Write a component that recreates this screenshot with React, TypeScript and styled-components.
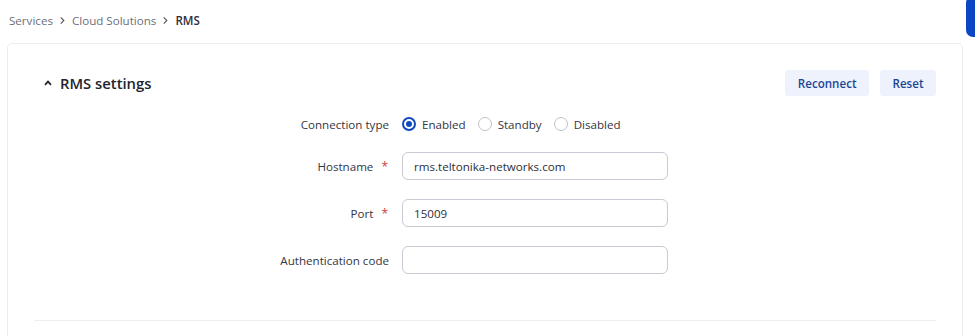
import styled, { createGlobalStyle } from "styled-components";

const GlobalStyle = createGlobalStyle`
  html, body {
    margin: 0;
    padding: 0;
    background: #ffffff;
    font-family: "Open Sans", "Noto Sans", sans-serif;
    color: #2b2b36;
  }
  * { box-sizing: border-box; }
`;

const Page = styled.div`
  position: relative;
  width: 975px;
  height: 336px;
  overflow: hidden;
  padding: 0 12px 0 7px;
`;

const SideTab = styled.div`
  position: absolute;
  top: -4px;
  right: -10px;
  width: 19px;
  height: 41px;
  background: #0b47c4;
  border-radius: 7px;
`;

const Breadcrumb = styled.nav`
  display: flex;
  align-items: center;
  gap: 5px;
  height: 43px;
  padding: 0 0 3px 2px;
  font-size: 11.6px;
`;

const Crumb = styled.span<{ $current?: boolean }>`
  color: ${(p) => (p.$current ? "#2f2f3a" : "#6c6f7a")};
  font-weight: ${(p) => (p.$current ? 600 : 400)};
`;

const Sep = styled.svg`
  width: 9px;
  height: 9px;
  margin-top: 1px;
`;

const Card = styled.section`
  border: 1px solid #ebedf3;
  border-radius: 5px;
  padding: 25px 26px 0 26px;
  height: 320px;
`;

const CardHeader = styled.div`
  display: flex;
  align-items: center;
  justify-content: space-between;
  height: 28px;
`;

const Title = styled.h2`
  display: flex;
  align-items: center;
  gap: 8px;
  margin: 0 0 0 10px;
  font-size: 14.8px;
  font-weight: 600;
  color: #23232d;
`;

const Actions = styled.div`
  display: flex;
  gap: 11px;
`;

const SoftButton = styled.button`
  height: 26px;
  padding: 0 12.5px;
  border: none;
  border-radius: 3px;
  background: #edf2fd;
  color: #1d4592;
  font-family: inherit;
  font-size: 11.6px;
  font-weight: 600;
`;

const Form = styled.div`
  display: grid;
  grid-template-columns: 355px 266px;
  grid-template-rows: 18px repeat(3, 28px);
  column-gap: 13px;
  row-gap: 19px;
  margin-top: 18px;
`;

const Label = styled.label`
  display: flex;
  align-items: center;
  justify-content: flex-end;
  gap: 8px;
  font-size: 11.6px;
  color: #35353f;
  white-space: nowrap;
`;

const Req = styled.span`
  color: #d23c3c;
  font-size: 12px;
  margin-right: 1px;
`;

const Radios = styled.div`
  display: flex;
  align-items: center;
  gap: 12px;
  white-space: nowrap;
`;

const RadioOpt = styled.span`
  display: flex;
  align-items: center;
  gap: 6px;
  font-size: 11.6px;
  color: #35353f;
`;

const Dot = styled.span<{ $on?: boolean }>`
  width: 14px;
  height: 14px;
  border-radius: 50%;
  border: ${(p) => (p.$on ? "2px solid #0e49c2" : "1px solid #bfc2cc")};
  display: flex;
  align-items: center;
  justify-content: center;
  &::after {
    content: "";
    display: ${(p) => (p.$on ? "block" : "none")};
    width: 6px;
    height: 6px;
    border-radius: 50%;
    background: #0e49c2;
  }
`;

const Input = styled.input`
  width: 266px;
  height: 28px;
  border: 1px solid #c9cad4;
  border-radius: 6px;
  padding: 0 11px;
  font-family: inherit;
  font-size: 11.6px;
  color: #2e2e38;
  background: #fff;
  outline: none;
`;

const Divider = styled.hr`
  border: none;
  border-top: 1px solid #eceef4;
  margin: 46px 0 0 0;
`;

const Chevron = () => (
  <Sep viewBox="0 0 10 10" fill="none">
    <path d="M3 1.5 6.5 5 3 8.5" stroke="#555" strokeWidth="1.2" />
  </Sep>
);

export default function App() {
  return (
    <>
      <GlobalStyle />
      <Page>
        <SideTab />
        <Breadcrumb>
          <Crumb>Services</Crumb>
          <Chevron />
          <Crumb>Cloud Solutions</Crumb>
          <Chevron />
          <Crumb $current>RMS</Crumb>
        </Breadcrumb>
        <Card>
          <CardHeader>
            <Title>
              <svg width="8" height="6" viewBox="0 0 8 6" fill="none">
                <path d="M1 4.8 4 1.6 7 4.8" stroke="#23232d" strokeWidth="1.7" />
              </svg>
              RMS settings
            </Title>
            <Actions>
              <SoftButton>Reconnect</SoftButton>
              <SoftButton>Reset</SoftButton>
            </Actions>
          </CardHeader>
          <Form>
            <Label>Connection type</Label>
            <Radios>
              <RadioOpt><Dot $on />Enabled</RadioOpt>
              <RadioOpt><Dot />Standby</RadioOpt>
              <RadioOpt><Dot />Disabled</RadioOpt>
            </Radios>
            <Label>Hostname <Req>*</Req></Label>
            <Input defaultValue="rms.teltonika-networks.com" />
            <Label>Port <Req>*</Req></Label>
            <Input defaultValue="15009" />
            <Label>Authentication code</Label>
            <Input defaultValue="" />
          </Form>
          <Divider />
        </Card>
      </Page>
    </>
  );
}
